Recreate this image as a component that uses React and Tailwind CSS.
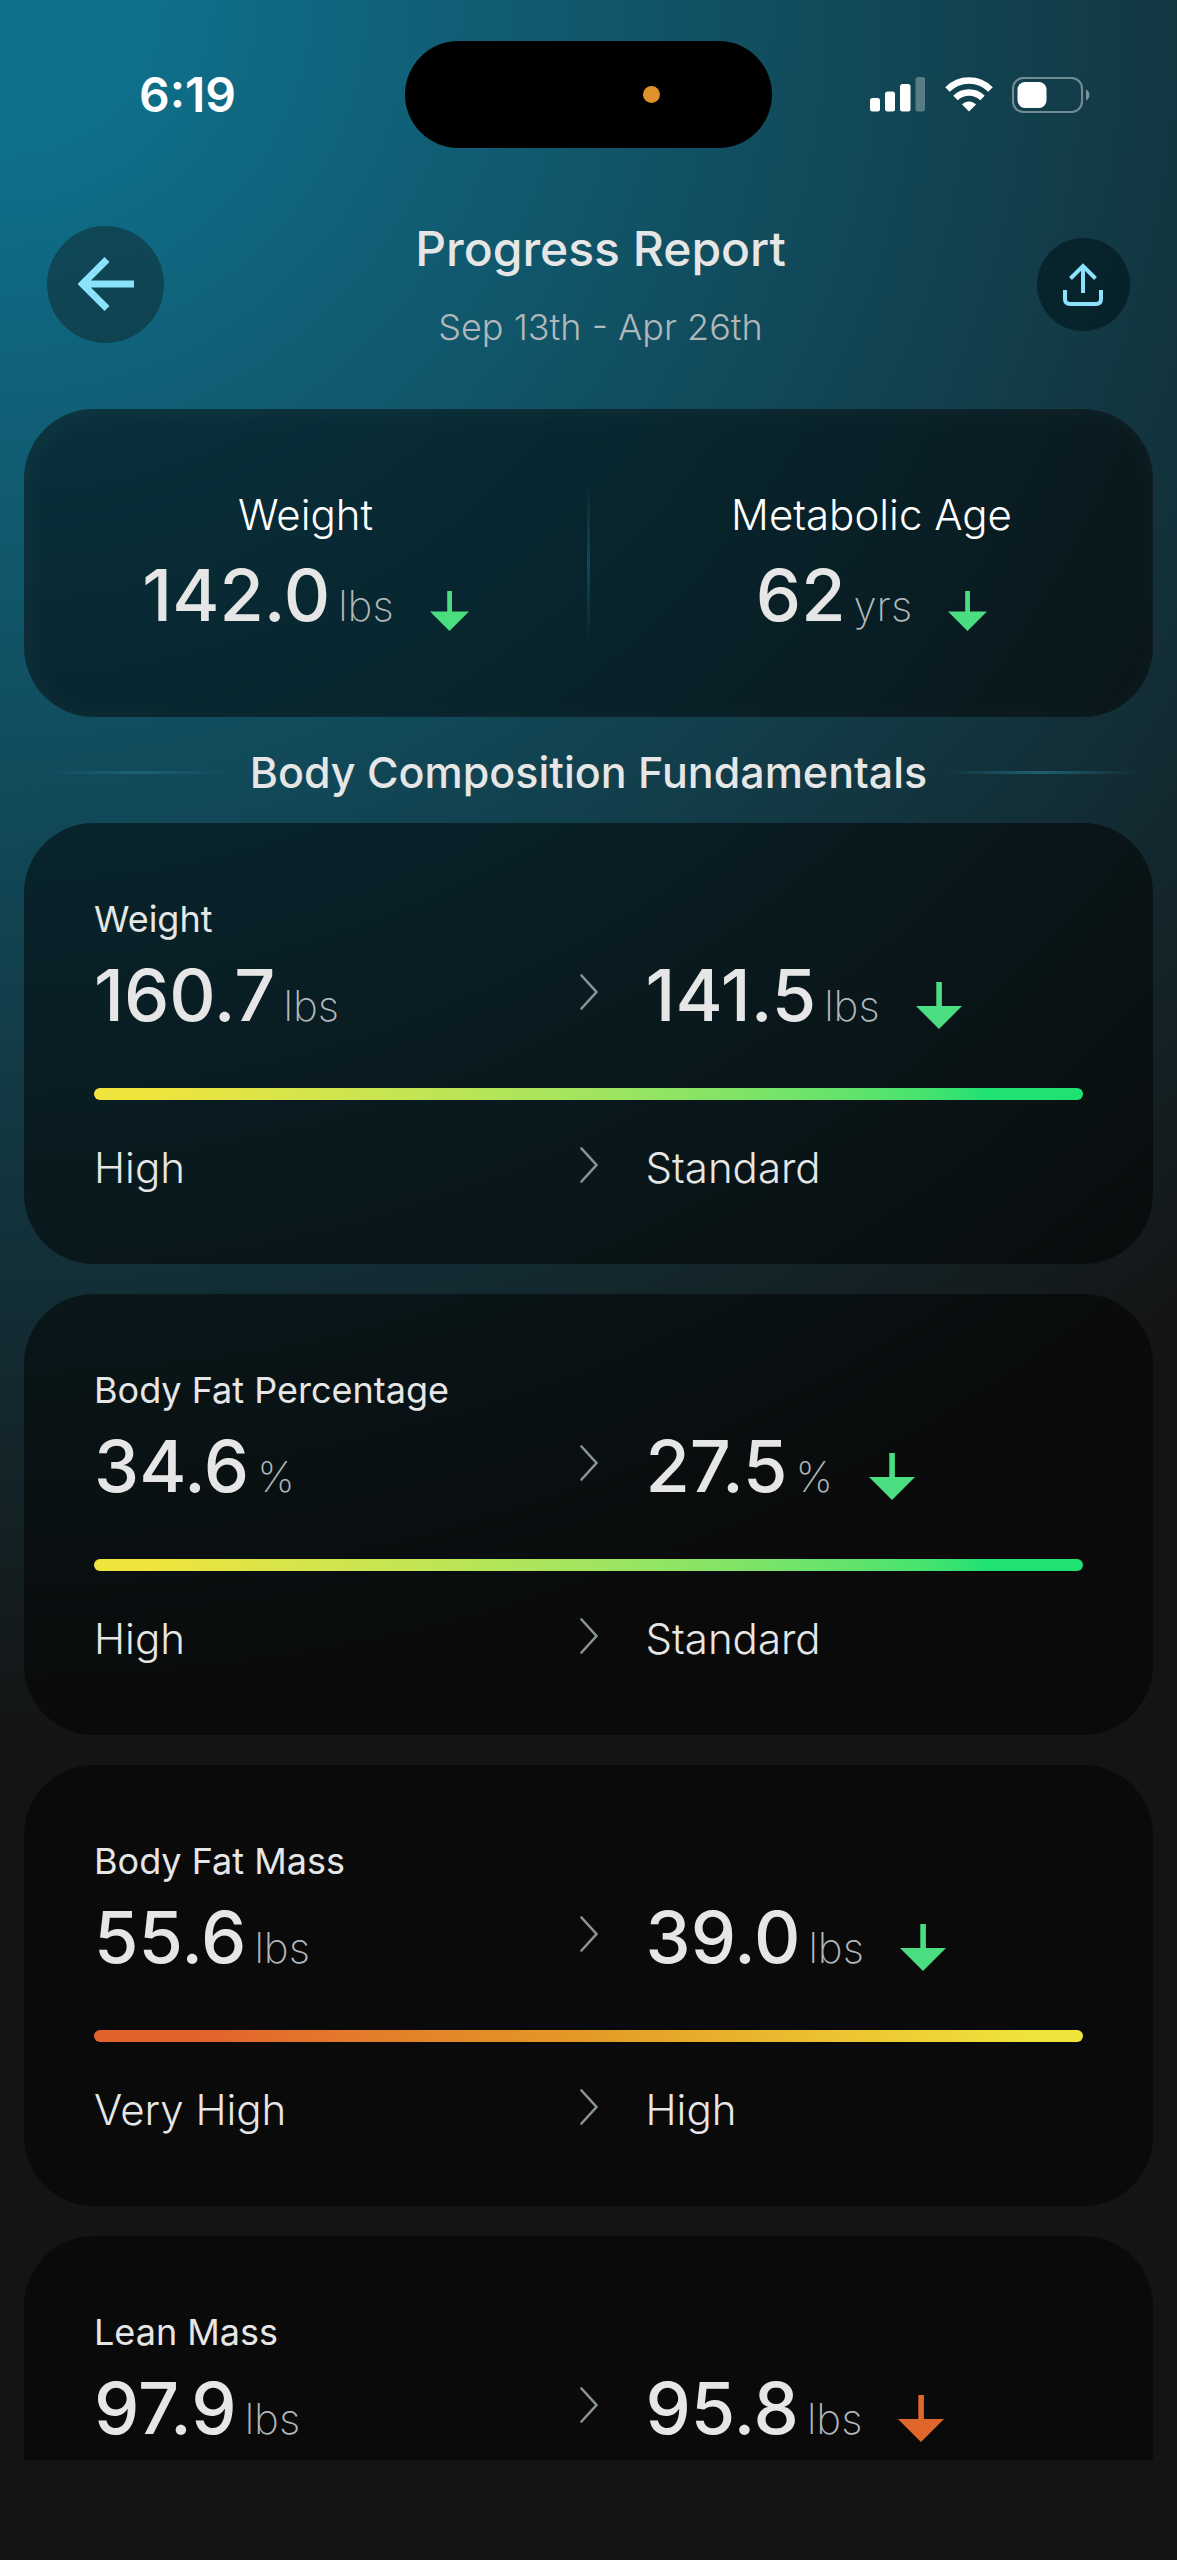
const summary = [
  { label: "Weight", value: "142.0", unit: "lbs" },
  { label: "Metabolic Age", value: "62", unit: "yrs" },
];

const metrics = [
  {
    name: "Weight",
    unit: "lbs",
    from: { value: "160.7", level: "High" },
    to: { value: "141.5", level: "Standard" },
    bar: "from-[#f0e43c] from-5% to-[#20e272] to-90%",
    trend: "text-[#4ade80]",
  },
  {
    name: "Body Fat Percentage",
    unit: "%",
    from: { value: "34.6", level: "High" },
    to: { value: "27.5", level: "Standard" },
    bar: "from-[#f0e43c] from-5% to-[#20e272] to-90%",
    trend: "text-[#4ade80]",
  },
  {
    name: "Body Fat Mass",
    unit: "lbs",
    from: { value: "55.6", level: "Very High" },
    to: { value: "39.0", level: "High" },
    bar: "from-[#e2622c] from-10% via-[#e39a26] to-[#f0e43c] to-95%",
    trend: "text-[#4ade80]",
  },
  {
    name: "Lean Mass",
    unit: "lbs",
    from: { value: "97.9" },
    to: { value: "95.8" },
    trend: "text-[#e0672c]",
  },
];

const DownArrow = ({ className }) => (
  <svg viewBox="0 0 46 47" fill="currentColor" className={className} aria-hidden="true">
    <path d="M20.3 0h5.600v24H46L23 47 0 24h20.300z" />
  </svg>
);

const Chevron = () => (
  <svg
    viewBox="0 0 18 36"
    className="w-[18px] h-9 mb-[6px] text-[#8a9396]"
    fill="none"
    stroke="currentColor"
    strokeWidth="2.6"
    strokeLinecap="round"
    aria-hidden="true"
  >
    <path d="M1.5 1.5L16.5 18L1.5 34.5" />
  </svg>
);

const StatusBar = () => (
  <div className="grid grid-cols-[1fr_auto_1fr] items-center pt-[41px]">
    <span className="pl-[139px] text-5xl leading-none font-semibold text-white">6:19</span>
    <div className="w-[367px] h-[107px] rounded-full bg-black flex items-center justify-end pr-[112px]">
      <span className="w-[17px] h-[17px] rounded-full bg-[#e0912a]" />
    </div>
    <div className="flex items-center justify-end gap-[19px] pr-[87px]">
      <svg viewBox="0 0 56 35" className="w-14 h-[35px]" fill="white" aria-label="Signal">
        <rect x="0" y="21" width="10" height="13.5" rx="2.5" />
        <rect x="15" y="14.5" width="10" height="20" rx="2.5" />
        <rect x="30" y="7" width="10.5" height="27.5" rx="2.5" />
        <rect x="45.5" y="0" width="9.5" height="34.5" rx="2.5" opacity="0.3" />
      </svg>
      <svg viewBox="0 0 48 35" className="w-12 h-[35px]" aria-label="Wi-Fi">
        <g fill="none" stroke="white" strokeWidth="6.4">
          <path d="M2.500 12.500C14.500 0.500 33.500 0.500 45.500 12.500" />
          <path d="M10.500 21C18 13.600 30 13.600 37.500 21" />
        </g>
        <path d="M24 34.500L17 27.500C20.800 23.500 27.200 23.500 31 27.500z" fill="white" />
      </svg>
      <svg viewBox="0 0 78 36" className="w-[78px] h-9" aria-label="Battery">
        <rect x="1" y="1" width="69" height="34" rx="10.500" fill="none" stroke="white" strokeOpacity="0.4" strokeWidth="2.200" />
        <rect x="5.500" y="5" width="29" height="26" rx="7.500" fill="white" />
        <path d="M74 12.500C78.500 14.500 78.500 21.500 74 23.500z" fill="white" fillOpacity="0.45" />
      </svg>
    </div>
  </div>
);

const Header = () => (
  <header className="flex items-center justify-between pt-[69px] px-[47px]">
    <button
      type="button"
      aria-label="Back"
      className="w-[117px] h-[117px] rounded-full bg-[#10232a]/50 flex items-center justify-center text-[#8be3fb]"
    >
      <svg viewBox="0 0 56 54" className="w-14 h-[54px]" fill="none" stroke="currentColor" strokeWidth="7" aria-hidden="true">
        <path d="M29 2.500L4.500 27L29 51.500M5 27H56" />
      </svg>
    </button>
    <div className="text-center">
      <h1 className="text-5xl leading-[64px] font-medium text-[#e6e6e6]">Progress Report</h1>
      <p className="mt-[22px] text-4xl leading-[48px] font-light text-[#b0b7ba]">Sep 13th - Apr 26th</p>
    </div>
    <button
      type="button"
      aria-label="Share"
      className="w-[93px] h-[93px] rounded-full bg-[#00141b]/60 flex items-center justify-center text-[#8be3fb]"
    >
      <svg viewBox="0 0 42 44" className="w-[42px] h-11" fill="none" stroke="currentColor" strokeWidth="4" aria-hidden="true">
        <path d="M8.500 16.500L21 4L33.500 16.500M21 4V31" />
        <path d="M3 28V37Q3 42 8 42H34Q39 42 39 37V28" />
      </svg>
    </button>
  </header>
);

const Reading = ({ value, unit }) => (
  <p className="text-[72px] leading-[80px] font-medium text-[#e6e6e6]">
    {value}
    <span className="ml-2 text-[42px] leading-none font-extralight text-[#b0b7ba]">{unit}</span>
  </p>
);

const SummaryCard = () => (
  <section className="mt-[58px] py-[82px] flex items-stretch rounded-[70px] bg-black/50 shadow-[inset_4px_4px_28px_rgba(255,255,255,0.04)]">
    {summary.map((item, index) => (
      <div key={item.label} className="contents">
        {index > 0 && (
          <div className="w-[3px] -my-2 bg-gradient-to-b from-transparent via-[#12475a] to-transparent" />
        )}
        <div className="flex-1 flex flex-col items-center">
          <h2 className="text-[42px] leading-[48px] font-light text-white">{item.label}</h2>
          <div className="mt-4 flex items-end">
            <Reading value={item.value} unit={item.unit} />
            <DownArrow className="w-[39px] h-10 ml-9 mb-1 text-[#4ade80]" />
          </div>
        </div>
      </div>
    ))}
  </section>
);

const SectionTitle = ({ children }) => (
  <div className="flex items-center gap-4 pt-[27px] pb-[23px] px-4">
    <span className="flex-1 h-[3px] bg-gradient-to-r from-transparent via-[#1d6072] to-transparent" />
    <h2 className="text-[43px] leading-[56px] font-medium text-[#e6e6e6]">{children}</h2>
    <span className="flex-1 h-[3px] bg-gradient-to-r from-transparent via-[#1d6072] to-transparent" />
  </div>
);

const MetricCard = ({ metric }) => {
  const { name, unit, from, to, bar, trend } = metric;

  return (
    <article className="min-h-[440px] shrink-0 px-[70px] py-[72px] rounded-[70px] bg-black/50 shadow-[inset_4px_4px_28px_rgba(255,255,255,0.01)]">
      <h3 className="text-4xl leading-[48px] text-[#e6e6e6]">{name}</h3>
      <div className="mt-3 grid grid-cols-[1fr_auto_1fr] items-center gap-x-12">
        <Reading value={from.value} unit={unit} />
        <Chevron />
        <div className="flex items-end">
          <Reading value={to.value} unit={unit} />
          <DownArrow className={`w-[46px] h-[47px] ml-9 mb-[6px] ${trend}`} />
        </div>
      </div>
      {bar && (
        <>
          <div className={`mt-[53px] h-3 rounded-full bg-gradient-to-r ${bar}`} />
          <div className="mt-11 grid grid-cols-[1fr_auto_1fr] items-center gap-x-12 text-[42px] leading-[48px] font-light text-[#e6e6e6]">
            <p>{from.level}</p>
            <Chevron />
            <p>{to.level}</p>
          </div>
        </>
      )}
    </article>
  );
};

export default function App() {
  return (
    <div className="h-screen flex flex-col pb-[100px] overflow-hidden bg-[#141414] bg-[radial-gradient(155%_68%_at_0_0,#0f708c_7%,#141414)] font-[Inter,sans-serif]">
      <StatusBar />
      <Header />
      <main className="flex-1 min-h-0 flex flex-col px-6 overflow-y-auto [scrollbar-width:none]">
        <SummaryCard />
        <SectionTitle>Body Composition Fundamentals</SectionTitle>
        <div className="flex flex-col gap-[30px]">
          {metrics.map((metric) => (
            <MetricCard key={metric.name} metric={metric} />
          ))}
        </div>
      </main>
    </div>
  );
}
